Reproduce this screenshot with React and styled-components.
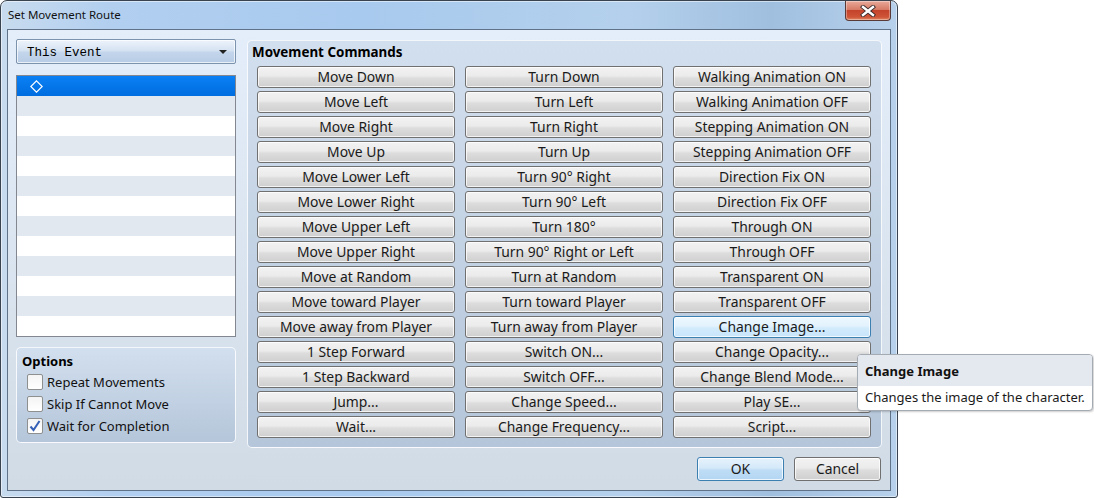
import React from 'react';
import styled, { createGlobalStyle } from 'styled-components';

const GlobalStyle = createGlobalStyle`
  body {
    margin: 0;
    background: #fff;
    font-family: "Noto Sans", "DejaVu Sans", sans-serif;
    color: #1a1a1a;
  }
`;

const commands = [
  ['Move Down', 'Turn Down', 'Walking Animation ON'],
  ['Move Left', 'Turn Left', 'Walking Animation OFF'],
  ['Move Right', 'Turn Right', 'Stepping Animation ON'],
  ['Move Up', 'Turn Up', 'Stepping Animation OFF'],
  ['Move Lower Left', 'Turn 90° Right', 'Direction Fix ON'],
  ['Move Lower Right', 'Turn 90° Left', 'Direction Fix OFF'],
  ['Move Upper Left', 'Turn 180°', 'Through ON'],
  ['Move Upper Right', 'Turn 90° Right or Left', 'Through OFF'],
  ['Move at Random', 'Turn at Random', 'Transparent ON'],
  ['Move toward Player', 'Turn toward Player', 'Transparent OFF'],
  ['Move away from Player', 'Turn away from Player', 'Change Image...'],
  ['1 Step Forward', 'Switch ON...', 'Change Opacity...'],
  ['1 Step Backward', 'Switch OFF...', 'Change Blend Mode...'],
  ['Jump...', 'Change Speed...', 'Play SE...'],
  ['Wait...', 'Change Frequency...', 'Script...'],
];

const options = [
  { label: 'Repeat Movements', checked: false },
  { label: 'Skip If Cannot Move', checked: false },
  { label: 'Wait for Completion', checked: true },
];

const Screen = styled.div`
  position: relative;
  width: 1094px;
  height: 498px;
  overflow: hidden;
`;

const Window = styled.div`
  width: 898px;
  height: 498px;
  box-sizing: border-box;
  border: 1px solid #38434f;
  border-radius: 7px 7px 3px 3px;
  background: linear-gradient(90deg, #c8dbee 0%, #b2cff0 12%, #a8caee 40%, #b4d0ec 70%, #a0bfdf 86%, #b7d1ec 100%);
  box-shadow: inset 0 0 0 1px rgba(255, 255, 255, 0.5);
  display: flex;
  flex-direction: column;
`;

const TitleBar = styled.div`
  height: 28px;
  display: flex;
  justify-content: space-between;
  align-items: flex-start;
  padding-left: 7px;
`;

const Title = styled.div`
  margin-top: 6px;
  font-size: 11.5px;
  line-height: 16px;
  color: #111;
`;

const CloseButton = styled.div`
  width: 46px;
  height: 20px;
  margin-right: 6px;
  box-sizing: border-box;
  border: 1px solid #5a3a36;
  border-top: none;
  border-radius: 0 0 4px 4px;
  background: linear-gradient(#e9a99a 0%, #d67b66 45%, #c4432b 50%, #cf5538 85%, #e08a66 100%);
  box-shadow: inset 0 0 0 1px rgba(255, 255, 255, 0.35);
  display: flex;
  align-items: center;
  justify-content: center;
`;

const Client = styled.div`
  flex: 1;
  margin: 0 6px 6px;
  border: 1px solid #5f7287;
  background: linear-gradient(#e4eefa, #d0dbe6);
  padding: 9px 8px;
  display: flex;
  flex-direction: column;
`;

const Main = styled.div`
  height: 409px;
  display: flex;
  gap: 11px;
  align-items: flex-start;
`;

const LeftColumn = styled.div`
  width: 220px;
  display: flex;
  flex-direction: column;
`;

const Dropdown = styled.div`
  height: 25px;
  box-sizing: border-box;
  border: 1px solid #7c93ad;
  border-radius: 2px;
  background: linear-gradient(#edf3fb 0%, #d6e3f2 45%, #c2d5eb 55%, #b8cce5 100%);
  box-shadow: inset 0 0 0 1px rgba(255, 255, 255, 0.7);
  display: flex;
  align-items: center;
  justify-content: space-between;
  padding: 2px 8px 0 10px;
  font-family: "Liberation Mono", "DejaVu Sans Mono", monospace;
  font-size: 12.5px;
  color: #000;
`;

const Arrow = styled.span`
  width: 0;
  height: 0;
  margin-top: -2px;
  border-left: 4px solid transparent;
  border-right: 4px solid transparent;
  border-top: 4px solid #222;
`;

const List = styled.div`
  margin-top: 11px;
  height: 262px;
  box-sizing: border-box;
  border: 1px solid #828790;
  background: #fff;
`;

const ListRow = styled.div`
  height: 20px;
  display: flex;
  align-items: center;
  padding-left: 13px;
  background: ${(p) =>
    p.$selected
      ? 'linear-gradient(#0a80f5, #006ddf)'
      : p.$odd
      ? '#e2e8f0'
      : '#fff'};
`;

const Group = styled.div`
  box-sizing: border-box;
  border: 1px solid rgba(255, 255, 255, 0.85);
  border-radius: 5px;
  background: linear-gradient(#d2dfee, #b5c6da);
`;

const OptionsGroup = styled(Group)`
  margin-top: 10px;
  height: 96px;
  padding: 4px 0 0 5px;
`;

const GroupTitle = styled.div`
  font-weight: bold;
  font-size: 13px;
  line-height: 18px;
  color: #000;
`;

const OptionsTitle = styled(GroupTitle)`
  margin-bottom: 1px;
`;

const CheckRow = styled.div`
  height: 22px;
  display: flex;
  align-items: center;
  gap: 4px;
  padding-left: 5px;
  font-size: 13px;
  color: #111;
`;

const CheckBox = styled.span`
  width: 16px;
  height: 16px;
  box-sizing: border-box;
  border: 1px solid #8e8f8f;
  border-radius: 2px;
  background: linear-gradient(#f4f4f4, #ffffff);
  display: flex;
  align-items: center;
  justify-content: center;
`;

const CommandsGroup = styled(Group)`
  margin-top: 1px;
  width: 635px;
  height: 408px;
  padding: 2px 0 0 9px;
`;

const CommandsTitle = styled(GroupTitle)`
  margin-left: -5px;
  margin-bottom: 5px;
  font-size: 13.4px;
`;

const CommandGrid = styled.div`
  display: grid;
  grid-template-columns: repeat(3, 198px);
  grid-auto-rows: 22px;
  column-gap: 10px;
  row-gap: 3px;
`;

const Button = styled.div`
  box-sizing: border-box;
  border: 1px solid ${(p) => (p.$hot ? '#3c7fb1' : '#707070')};
  border-radius: 3px;
  background: ${(p) =>
    p.$hot
      ? 'linear-gradient(#eef8fe 0%, #e2f2fd 45%, #d2ebfc 55%, #c8e5fb 100%)'
      : 'linear-gradient(#f2f2f2 0%, #ebebeb 45%, #dddddd 55%, #cfcfcf 100%)'};
  box-shadow: inset 0 0 0 1px rgba(255, 255, 255, 0.75);
  display: flex;
  align-items: center;
  justify-content: center;
  padding-bottom: 2px;
  font-size: 13.9px;
  color: #1a1a1a;
  white-space: nowrap;
`;

const Footer = styled.div`
  margin-top: 9px;
  margin-right: 1px;
  display: flex;
  justify-content: flex-end;
  gap: 10px;
`;

const DialogButton = styled(Button)`
  width: 87px;
  height: 24px;
  padding-bottom: 1px;
  ${(p) =>
    p.$default &&
    `
    border-color: #3c7fb1;
    background: linear-gradient(#e6f2fc 0%, #d5e9f9 45%, #bedcf5 55%, #b4d6f3 100%);
  `}
`;

const Tooltip = styled.div`
  position: absolute;
  left: 857px;
  top: 354px;
  width: 236px;
  height: 57px;
  box-sizing: border-box;
  border: 1px solid #a5abb3;
  border-radius: 4px;
  background: #fff;
  overflow: hidden;
  box-shadow: 1px 1px 2px rgba(0, 0, 0, 0.2);
`;

const TooltipHead = styled.div`
  height: 31px;
  background: #e4e8ef;
  padding-left: 7px;
  font-weight: bold;
  font-size: 13px;
  line-height: 33px;
  color: #111;
`;

const TooltipBody = styled.div`
  padding-left: 7px;
  font-size: 13px;
  line-height: 22px;
  color: #1a1a1a;
`;

function Diamond() {
  return (
    <svg width="13" height="13" viewBox="0 0 13 13">
      <polygon points="6.5,0.8 12.2,6.5 6.5,12.2 0.8,6.5" fill="none" stroke="#fff" strokeWidth="1.2" />
    </svg>
  );
}

function CloseX() {
  return (
    <svg width="16" height="12" viewBox="0 0 16 12">
      <path d="M3 2 L13 10 M13 2 L3 10" stroke="#3b2a2a" strokeWidth="4.2" strokeLinecap="square" />
      <path d="M3 2 L13 10 M13 2 L3 10" stroke="#fff" strokeWidth="2.4" strokeLinecap="square" />
    </svg>
  );
}

function Check() {
  return (
    <svg width="12" height="12" viewBox="0 0 12 12">
      <path d="M1.5 6.5 L4.5 10 L10.5 1" fill="none" stroke="#3560b6" strokeWidth="2" />
    </svg>
  );
}

export default function App() {
  return (
    <Screen>
      <GlobalStyle />
      <Window>
        <TitleBar>
          <Title>Set Movement Route</Title>
          <CloseButton>
            <CloseX />
          </CloseButton>
        </TitleBar>
        <Client>
          <Main>
            <LeftColumn>
              <Dropdown>
                This Event
                <Arrow />
              </Dropdown>
              <List>
                {Array.from({ length: 13 }).map((_, i) => (
                  <ListRow key={i} $selected={i === 0} $odd={i % 2 === 1}>
                    {i === 0 && <Diamond />}
                  </ListRow>
                ))}
              </List>
              <OptionsGroup>
                <OptionsTitle>Options</OptionsTitle>
                {options.map((o) => (
                  <CheckRow key={o.label}>
                    <CheckBox>{o.checked && <Check />}</CheckBox>
                    {o.label}
                  </CheckRow>
                ))}
              </OptionsGroup>
            </LeftColumn>
            <CommandsGroup>
              <CommandsTitle>Movement Commands</CommandsTitle>
              <CommandGrid>
                {commands.flat().map((c) => (
                  <Button key={c} $hot={c === 'Change Image...'}>
                    {c}
                  </Button>
                ))}
              </CommandGrid>
            </CommandsGroup>
          </Main>
          <Footer>
            <DialogButton $default>OK</DialogButton>
            <DialogButton>Cancel</DialogButton>
          </Footer>
        </Client>
      </Window>
      <Tooltip>
        <TooltipHead>Change Image</TooltipHead>
        <TooltipBody>Changes the image of the character.</TooltipBody>
      </Tooltip>
    </Screen>
  );
}
